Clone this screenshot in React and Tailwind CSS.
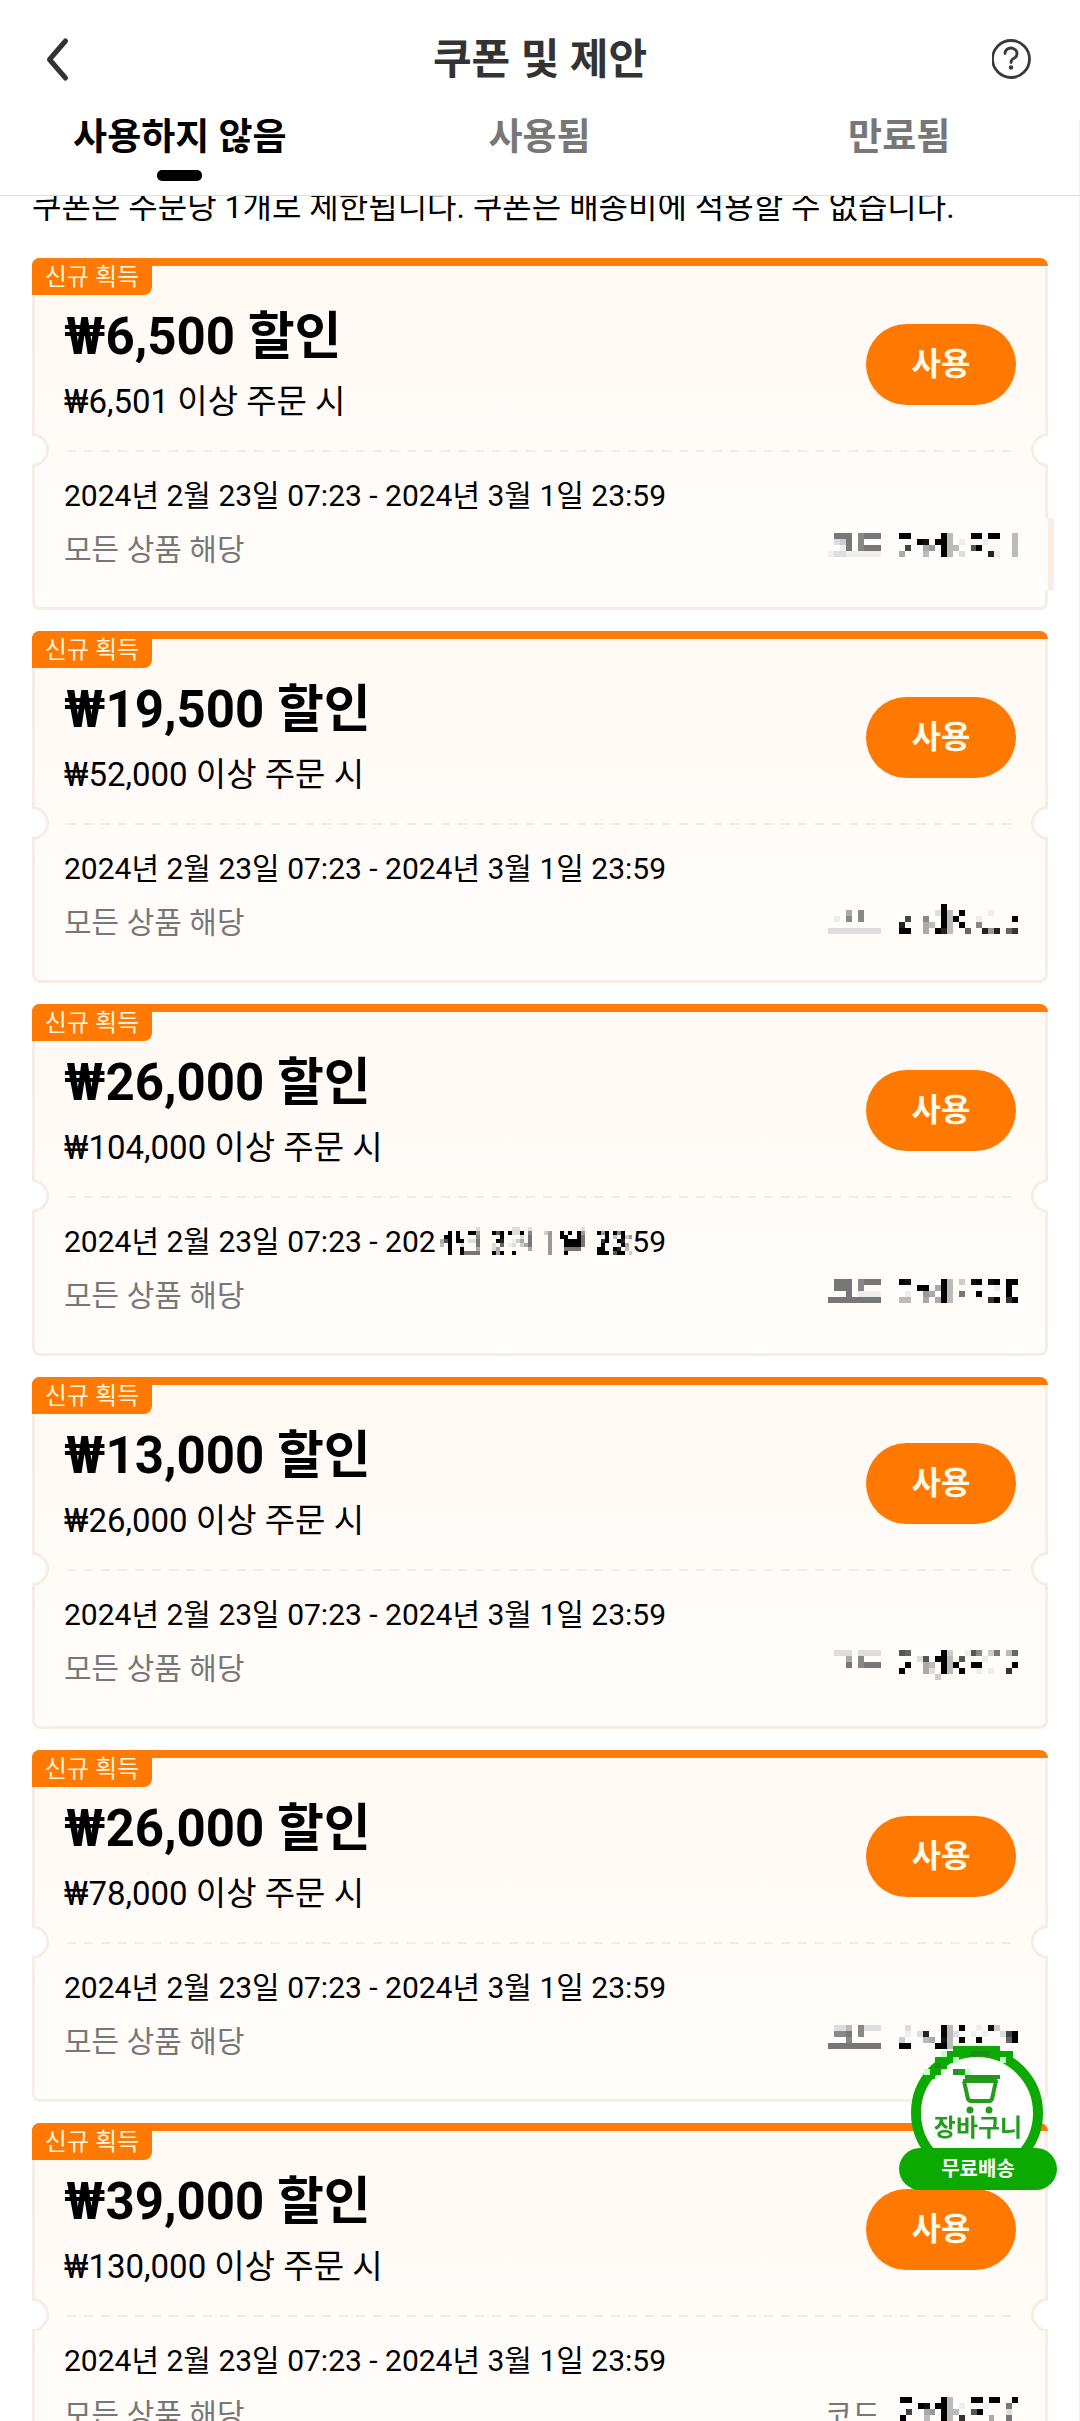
const coupons = [
  {
    amount: '₩6,500', minimum: '₩6,501',
    code: [
      '.777.8777...00.....0b...00.00..b',
      '.dc7.8.........01.00b.e...e....b',
      '..e7.8777....4..a9.0bb..50.....b',
      'eddeeeeee...a...b..0b.d....2e..b',
    ],
    shifted: true,
  },
  {
    amount: '₩19,500', minimum: '₩52,000',
    code: [
      '...................0............',
      '...a.8............d0b.0....e....',
      '.e.8.8.......4..8..0b0...e.....0',
      '..f.........2...ab.0b.0..8......',
      'ddddddddd...00..a.02b..6..292.63',
    ],
  },
  {
    amount: '₩26,000', minimum: '₩104,000',
    code: [
      '.777.8777...01.....0b.c.10.10.00',
      '.777.8.........00.a0b.......e.0.',
      '...7.eeee....e..9a.0b.7..0....0.',
      '777777777...bb..a.a0b......30.30',
    ],
    maskedDate: true,
  },
  {
    amount: '₩13,000', minimum: '₩26,000',
    code: [
      '.ddd.dddd...56.....0c..e58.c7.b6',
      '...a.8.........d5.00b.5...e.....',
      '...7.8777....0..ab.0b0..00.....0',
      '..f.........0...ad.0b.0..e.e..3.',
      '..................c.............',
    ],
  },
  {
    amount: '₩26,000', minimum: '₩78,000',
    code: [
      '.ddb.8ddd....d.....0b.0..e.1c...',
      '.887.8.......e.d2..0bd..e.e..d40',
      '...8........c...ba.1b.0..0....60',
      '777777777...00....00b...........',
    ],
  },
  {
    amount: '₩39,000', minimum: '₩130,000',
    code: [
      '00.....0b...00.00..0',
      '...01.00b.e...e...7.',
      '.4..a9.0bb..50....d.',
      '0...b..0b.3....a..7.',
    ],
    label: true,
  },
];

const dateMask = [
  '..........d........dd..d............d............',
  '...0.0..009...050.0dd0.8...c9..0e0.09...090.080..',
  '..00.0....8.....0....d.7....9..00..07.....0.b.0c9',
  '.a50.00.dd7....02..eca.7....9...00007....30..02.e',
  '.b.0..d...7...d.6.ed.ca7....9...00007....0...e0a.',
  '...0..0...a...da.......a....9...7777....00..02.b.',
  '...0..07777...0a0..0........9...0.......000.500.c',
];

// Each hex digit is one square, the digit being its grey level.
function Mosaic({ rows, background, className }) {
  const cols = rows[0].length;
  return (
    <svg className={className} viewBox={`0 0 ${cols} ${rows.length}`} preserveAspectRatio="none" shapeRendering="crispEdges" aria-hidden="true">
      {background && <rect width={cols} height={rows.length} fill={background} />}
      {rows.map((row, y) =>
        [...row].map((level, x) =>
          level === '.' ? null : (
            <rect key={`${x}-${y}`} x={x} y={y} width="1" height="1" fill={`#${level}${level}${level}`} />
          )
        )
      )}
    </svg>
  );
}

function Header() {
  return (
    <header className="shrink-0 border-b border-[#dedede] bg-white">
      <div className="flex h-[120px] items-center justify-between px-10">
        <button aria-label="뒤로" className="flex size-12 items-center">
          <svg className="h-12 w-9" viewBox="0 0 36 48" fill="none" stroke="#333" strokeWidth="5" strokeLinecap="round" strokeLinejoin="round">
            <path d="M25.5 5 9.5 23.5 25.5 42" />
          </svg>
        </button>
        <h1 className="text-[42px] leading-[60px] font-bold text-[#333]">쿠폰 및 제안</h1>
        <button aria-label="도움말" className="flex size-12 items-center justify-end">
          <svg className="size-12" viewBox="-24 -24 48 48" fill="none" stroke="#3a3a3a" strokeWidth="2.8" strokeLinecap="round">
            <circle cx="-5" cy="-1" r="18.5" />
            <path d="M-11 -6.5a6 5.500 0 1 1 9.500 4.500Q-5 -.5 -5 2.500" />
            <circle cx="-5" cy="7.5" r="2.2" fill="#3a3a3a" stroke="none" />
          </svg>
        </button>
      </div>
      <nav className="grid grid-cols-3 border-r border-[#f2f2f2]">
        {['사용하지 않음', '사용됨', '만료됨'].map((tab, i) => (
          <button key={tab} className={`flex flex-col items-center gap-3.5 pb-3.5 text-[37px] leading-9 font-bold ${i === 0 ? 'text-black' : 'text-[#777]'}`}>
            {tab}
            <span className={`h-[11px] w-[45px] rounded-[5px] ${i === 0 ? 'bg-black' : ''}`} />
          </button>
        ))}
      </nav>
    </header>
  );
}

function Coupon({ amount, minimum, code, label, maskedDate, shifted }) {
  return (
    <article className="relative">
      <div className="h-2 rounded-t-lg bg-[#fb7c0a]" />
      <div className="relative h-[344px] rounded-b-lg border-x-[3px] border-b-[3px] border-[#f8ede3] bg-linear-to-b from-[#fff9f4] to-[#fffdfb] px-[29px]">
        <div className="flex h-[184px] items-center justify-between pt-3">
          <div className="pt-1">
            <h2 className="text-[51px] leading-[72px] font-bold">{amount} 할인</h2>
            <p className="text-[33px] leading-[58px]">{minimum} 이상 주문 시</p>
          </div>
          <button className="h-[81px] w-[150px] rounded-full bg-[#ff7800] text-[32px] font-bold text-[#fffaea]">사용</button>
        </div>
        <div className="mx-[3px] h-0.5 bg-[repeating-linear-gradient(90deg,#eeeded_0_9px,transparent_9px_17px)]" />
        <span className="absolute top-[167px] -left-[3px] h-[34px] w-[17px] rounded-r-full border-[3px] border-l-0 border-[#f8ede3] bg-white" />
        <span className="absolute top-[167px] -right-[3px] h-[34px] w-[17px] rounded-l-full border-[3px] border-r-0 border-[#f8ede3] bg-white" />
        <p className="pt-[17px] text-[30px] leading-[54px]">
          2024년 2월 23일 07:23 - 202
          <span className="relative inline-block">
            4년 3월 1일 23:
            {maskedDate && <Mosaic rows={dateMask} background="#fffcf8" className="absolute top-3 left-0 h-7 w-full" />}
          </span>
          59
        </p>
        <div className="flex h-[54px] justify-between text-[30px] leading-[54px] text-[#777]">
          <p>모든 상품 해당</p>
          <div className="-mr-0.5 flex items-center gap-5">
            {label && <span>코드</span>}
            <Mosaic rows={code} className={label ? 'mb-3 h-6 w-[118px]' : code.length === 5 ? 'mb-2 h-[30px] w-[190px]' : 'mb-2.5 h-6 w-[190px]'} />
          </div>
        </div>
        {shifted && (
          <svg className="absolute top-[252px] -right-[9px] h-[72px] w-[9px]" viewBox="0 0 9 72" aria-hidden="true">
            <path d="M0 0h3v72H0z" fill="#fffdfa" />
            <path d="M3 0h6v72H3z" fill="#f8ede4" />
          </svg>
        )}
      </div>
      <span className="absolute top-0 left-0 flex h-[37px] w-[120px] items-center justify-center rounded-tl-lg rounded-br-lg bg-[#ff7903] text-2xl text-[#fff6dd]">
        신규 획득
      </span>
    </article>
  );
}

function CartButton() {
  return (
    <button className="fixed right-[23px] bottom-[231px] flex w-[158px] flex-col items-center">
      <svg className="absolute top-0 left-0 h-[134px] w-[158px]" viewBox="0 0 158 134" aria-hidden="true">
        <circle cx="78" cy="67" r="61" fill="#fff" stroke="#0caa00" strokeWidth="10" />
        <g shapeRendering="crispEdges">
          <path d="M54 0H101V5H114V17H108V11H54V17H48V23H42V29H36V33H25V29H30V23H36V11H48V5H54z" fill="#0caa00" />
          <path d="M72 5H90V10H72zM36 17H42V22H36z" fill="#2a861f" />
          <path d="M42 5H48V11H42zM54 11H60V17H54zM101 11H107V17H101zM25 23H31V29H25zM66 23H72V29H66z" fill="#c5ffc5" />
          <path d="M54 23H60V29H54z" fill="#348a2b" />
          <path d="M60 23H66V29H60z" fill="#12aa0d" />
          <path d="M66 29H101V33H66z" fill="#229618" />
        </g>
        <path d="M64 35H97L93 53Q92 55 90 55H73Q70 55 69 53L65 35" fill="none" stroke="#229c19" strokeWidth="4" strokeLinejoin="round" />
        <circle cx="71" cy="64" r="3.5" fill="#229c19" />
        <circle cx="90" cy="64" r="3.5" fill="#229c19" />
      </svg>
      <span className="relative pt-16 text-2xl leading-9 font-bold text-[#239b1c]">장바구니</span>
      <span className="relative mt-0.5 h-[42px] w-full rounded-full bg-[#0caa00] text-[20px] leading-[42px] font-bold text-white">무료배송</span>
    </button>
  );
}

export default function App() {
  return (
    <div className="flex h-screen flex-col overflow-hidden bg-white font-[Roboto,'Noto_Sans_CJK_KR',sans-serif] text-black" lang="ko">
      <Header />
      <main className="min-h-0 flex-1 overflow-hidden border-r border-[#f2f2f2] pr-[31px] pl-8">
        <p className="-mt-3.5 mb-6.5 text-[32px] leading-[50px] whitespace-nowrap">쿠폰은 주문당 1개로 제한됩니다. 쿠폰은 배송비에 적용할 수 없습니다.</p>
        <div className="flex flex-col gap-[21px]">
          {coupons.map((coupon) => (
            <Coupon key={coupon.minimum} {...coupon} />
          ))}
        </div>
      </main>
      <CartButton />
    </div>
  );
}
